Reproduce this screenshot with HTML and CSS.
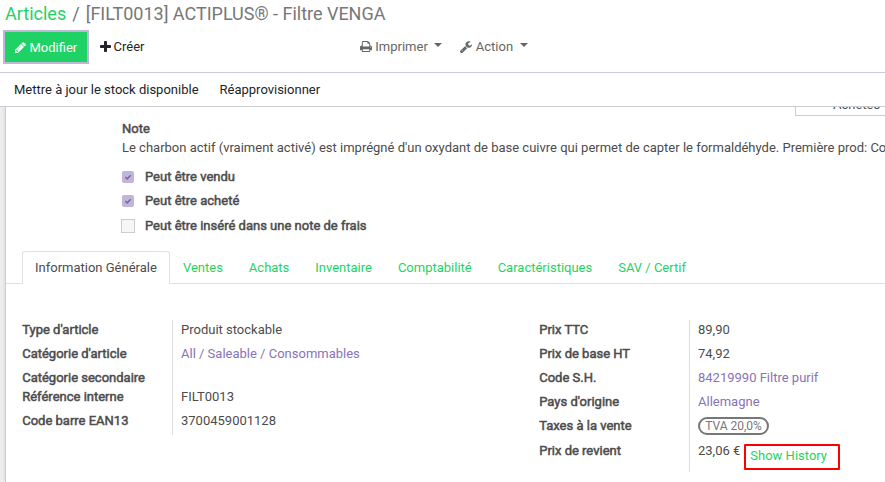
FILE: index.html
```html
<!DOCTYPE html>
<html lang="fr">
<head>
<meta charset="utf-8">
<title>Articles</title>
<link rel="stylesheet" href="styles.css">
</head>
<body>
<header class="control-panel">
  <div class="breadcrumb"><a>Articles</a><span class="sep">/</span><span class="current">[FILT0013] ACTIPLUS® - Filtre VENGA</span></div>
  <div class="toolbar">
    <div class="buttons">
      <button class="btn-primary"><svg class="pencil" viewBox="0 0 1536 1536"><path d="M363 1408l91-91-235-235-91 91v107h128v128zM886 480q0-22-22-22-10 0-17 7l-542 542q-7 7-7 17 0 22 22 22 10 0 17-7l542-542q7-7 7-17zM832 288l416 416-832 832H0v-416zM1515 384q0 53-37 90l-166 166-416-416 166-165q36-38 90-38 53 0 91 38l235 234q37 39 37 91z"/></svg>Modifier</button>
      <button class="btn-plain"><svg class="plus" viewBox="0 0 11 11"><path d="M4 .8Q4 0 4.800 0h1.400Q7 0 7 .8V4h3.200q.8 0 .8.8v1.400q0 .8-.8.8H7v3.200q0 .8-.8.8H4.800q-.8 0-.8-.8V7H.8Q0 7 0 6.200V4.800Q0 4 .8 4H4z"/></svg>Créer</button>
    </div>
    <div class="actions">
      <button class="btn-menu"><svg class="printer" viewBox="0 0 1664 1536"><path d="M384 1408h896v-256H384zM384 768h896V384h-160q-40 0-68-28t-28-68V128H384zM1536 832q0-26-19-45t-45-19-45 19-19 45 19 45 45 19 45-19 19-45zM1664 832v416q0 13-9.500 22.500t-22.500 9.500h-224v160q0 40-28 68t-68 28H352q-40 0-68-28t-28-68v-160H32q-13 0-22.500-9.500T0 1248V832q0-79 56.500-135.500T192 640h64V96q0-40 28-68t68-28h672q40 0 88 20t76 48l152 152q28 28 48 76t20 88v256h64q79 0 135.500 56.500T1664 832z"/></svg>Imprimer<i class="caret"></i></button>
      <button class="btn-menu"><svg class="wrench" viewBox="0 0 1641 1643"><path d="M363 1344q0-26-19-45t-45-19-45 19-19 45 19 45 45 19 45-19 19-45zM1007 957l-682 682q-37 37-90 37-52 0-91-37L38 1531q-38-36-38-90 0-53 38-91l681-681q39 98 114.500 173.500T1007 957zM1641 522q0 39-23 106-47 134-164.500 217.500T1195 929q-185 0-316.500-131.500T747 481t131.500-316.500T1195 33q58 0 121.500 16.500T1424 96q16 11 16 28t-16 28l-293 169v224l193 107q5-3 79-48.500t135.500-81T1609 487q15 0 23.500 10t8.500 25z"/></svg>Action<i class="caret"></i></button>
    </div>
  </div>
</header>
<nav class="statusbar"><a>Mettre à jour le stock disponible</a><a>Réapprovisionner</a></nav>
<main class="content">
  <section class="sheet">
    <div class="stat-row"><div class="stat-button"><span>Achetés</span></div></div>
    <div class="intro">
      <div class="label">Note</div>
      <p class="note">Le charbon actif (vraiment activé) est imprégné d'un oxydant de base cuivre qui permet de capter le formaldéhyde. Première prod: Co</p>
      <div class="option"><span class="check on"><svg viewBox="0 0 12 12"><path d="M3.300 6l1.900 1.900 3.600-3.700"/></svg></span><span class="label">Peut être vendu</span></div>
      <div class="option"><span class="check on"><svg viewBox="0 0 12 12"><path d="M3.300 6l1.900 1.900 3.600-3.700"/></svg></span><span class="label">Peut être acheté</span></div>
      <div class="option"><span class="check"></span><span class="label">Peut être inséré dans une note de frais</span></div>
    </div>
    <div class="tabs"><a class="active">Information Générale</a><a>Ventes</a><a>Achats</a><a>Inventaire</a><a>Comptabilité</a><a>Caractéristiques</a><a>SAV / Certif</a></div>
    <div class="groups">
      <div class="group">
        <div class="field"><span class="label">Type d'article</span><span class="value">Produit stockable</span></div>
        <div class="field"><span class="label">Catégorie d'article</span><span class="value link">All / Saleable / Consommables</span></div>
        <div class="field compact"><span class="label">Catégorie secondaire</span><span class="value"></span></div>
        <div class="field"><span class="label">Référence interne</span><span class="value">FILT0013</span></div>
        <div class="field"><span class="label">Code barre EAN13</span><span class="value">3700459001128</span></div>
      </div>
      <div class="group">
        <div class="field"><span class="label">Prix TTC</span><span class="value">89,90</span></div>
        <div class="field"><span class="label">Prix de base HT</span><span class="value">74,92</span></div>
        <div class="field"><span class="label">Code S.H.</span><span class="value link">84219990 Filtre purif</span></div>
        <div class="field"><span class="label">Pays d'origine</span><span class="value link">Allemagne</span></div>
        <div class="field tax"><span class="label">Taxes à la vente</span><span class="value"><span class="tag">TVA 20,0%</span></span></div>
        <div class="field cost"><span class="label">Prix de revient</span><span class="value">23,06 €<a class="history">Show History</a></span></div>
      </div>
    </div>
  </section>
</main>
</body>
</html>
```
FILE: styles.css
```css
* { box-sizing: border-box; }
body {
  margin: 0;
  height: 482px;
  overflow: hidden;
  display: flex;
  flex-direction: column;
  background: #fff;
  color: #4c4c4c;
  font: 13px/19px Roboto, sans-serif;
}
button { font: inherit; border: 0; background: none; padding: 0; display: flex; align-items: center; }
svg { fill: currentColor; flex: none; }

.control-panel { height: 73px; flex: none; border-bottom: 1px solid #c9ccd2; }
.breadcrumb { height: 30px; padding-left: 5px; font-size: 18px; line-height: 27px; white-space: nowrap; }
.breadcrumb a { color: #1fd265; }
.breadcrumb .sep { margin: 0 6px; color: #6c757d; }
.breadcrumb .current { color: #777; letter-spacing: -0.01px; }
.toolbar { display: flex; height: 34px; }
.buttons { display: flex; width: 360px; padding-left: 5px; }
.btn-primary {
  width: 82px;
  height: 30px;
  margin-top: 2px;
  padding-left: 10px;
  background: #1fd265;
  color: #fff;
  box-shadow: 0 0 0 2px #c1b6d8;
}
.btn-plain { margin-left: 13px; height: 33px; color: #212529; }
.pencil { width: 11px; height: 11px; margin-right: 3.500px; }
.plus { width: 11px; height: 11px; margin: -1px 2.500px 0 0; }
.actions { display: flex; gap: 18px; }
.btn-menu { height: 33px; color: #666; }
.printer { width: 12px; height: 11px; margin-right: 3.300px; }
.wrench { width: 12px; height: 12px; margin-right: 3.500px; }
.caret { margin: -4px 0 0 6.500px; border: 4px solid transparent; border-top-color: #666; border-bottom: 0; }

.statusbar {
  display: flex;
  gap: 21px;
  height: 34px;
  flex: none;
  padding-left: 14px;
  line-height: 33px;
  color: #212529;
  border-bottom: 1px solid #c9ccd2;
}

.content { flex: 1; min-height: 0; padding-left: 5px; background: #eee; overflow: hidden; }
.sheet { height: 100%; border-left: 1px solid #ccc; background: #fff; box-shadow: 0 0 4px #d5d5d5; }
.stat-row { display: flex; justify-content: flex-end; height: 12px; overflow: hidden; }
.stat-button { display: flex; align-items: flex-end; width: 90px; height: 9px; padding-left: 37px; border: 1px solid #c9ccd2; border-width: 0 0 1px 1px; }
.stat-button span { line-height: 19px; margin-bottom: 1px; }
.intro { padding-left: 116px; }
.label { -webkit-text-stroke: 0.5px currentColor; }
.note { margin: 0 0 7px; white-space: nowrap; }
.option { display: flex; align-items: center; height: 24.500px; }
.option .label { margin-left: 11px; }
.check { width: 14px; height: 14px; margin: 1px -1px 0; background: #f6f6f6; border: 1px solid #ccc; }
.check.on { width: 12px; height: 12px; margin: 0.600px 0 0; border: 0; border-radius: 2px; background: #c1b6d8; }
.check svg { display: block; fill: none; stroke: #7c65a9; stroke-width: 1.600; }

.tabs { display: flex; height: 33px; margin-top: 13px; padding-left: 16px; border-bottom: 1px solid #dee2e6; }
.tabs a { height: 33px; padding: 7px 12.970px 0; color: #1fd265; white-space: nowrap; }
.tabs .active { width: 148px; padding: 6px 12px 0; background: #fff; color: #4c4c4c; border: 1px solid #dee2e6; border-bottom: 0; border-radius: 3px 3px 0 0; }

.groups { display: flex; align-items: flex-start; padding: 36px 0 0 16px; }
.group { width: 517px; flex: none; }
.field { display: flex; height: 24px; }
.field .label { width: 150px; padding-left: 0.200px; }
.field .value { flex: 1; padding-left: 8px; border-left: 1px solid #ddd; white-space: nowrap; }
.field .link { color: #8873b5; }
.field.compact { height: 19px; }
.field.tax { height: 25px; }
.field.cost { height: 31px; }
.cost .value { display: flex; }
.tag { display: inline-block; height: 18px; margin-top: 1px; padding: 0 5.200px; border: 2px solid #777; border-radius: 9px; font-size: 12px; line-height: 14px; color: #777; vertical-align: top; }
.history { flex: none; width: 96px; height: 26px; margin: 3px 0 0 4px; padding-left: 4px; border: 2px solid #f00; border-radius: 1px; line-height: 20px; color: #1fd265; }
```
